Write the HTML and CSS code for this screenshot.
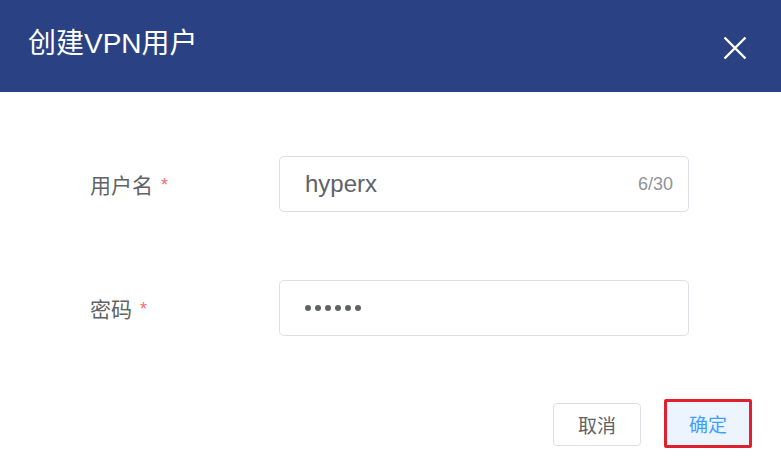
FILE: index.html
```html
<!DOCTYPE html>
<html lang="zh">
<head>
<meta charset="utf-8">
<link rel="stylesheet" href="styles.css">
</head>
<body>
<div class="dialog">
  <div class="header">
    <span class="title">创建VPN用户</span>
    <svg class="close" width="24" height="24" viewBox="0 0 24 24"><path d="M1.5 1.5 L22.5 22.5 M22.5 1.5 L1.5 22.5" stroke="#fff" stroke-width="2.4" fill="none"/></svg>
  </div>
  <div class="form">
    <div class="row">
      <div class="label">用户名<span class="req">*</span></div>
      <div class="input">
        <span class="value">hyperx</span>
        <span class="count">6/30</span>
      </div>
    </div>
    <div class="row">
      <div class="label">密码<span class="req">*</span></div>
      <div class="input">
        <span class="dots"><i></i><i></i><i></i><i></i><i></i><i></i></span>
      </div>
    </div>
  </div>
  <div class="footer">
    <div class="btn">取消</div>
    <div class="btn primary">确定</div>
  </div>
</div>
</body>
</html>
```
FILE: styles.css
```css
html, body {
  margin: 0;
  padding: 0;
  background: #fff;
  font-family: "Liberation Sans", "Noto Sans CJK SC", sans-serif;
}
.dialog {
  width: 781px;
  height: 475px;
  display: flex;
  flex-direction: column;
}
.header {
  height: 92px;
  background: #2a4283;
  display: flex;
  align-items: center;
  justify-content: space-between;
  padding: 0 34px 0 28px;
  box-sizing: border-box;
}
.title {
  color: #fff;
  font-size: 28px;
  line-height: 1;
  margin-top: -4px;
}
.close {
  display: block;
  margin-top: 4px;
}
.form {
  padding: 64px 0 0 90px;
  display: flex;
  flex-direction: column;
  gap: 68px;
}
.row {
  display: flex;
  align-items: center;
  height: 56px;
}
.label {
  width: 189px;
  font-size: 21px;
  color: #606266;
}
.req {
  color: #f56c6c;
  font-size: 18px;
  margin-left: 8px;
  vertical-align: 2px;
}
.input {
  width: 410px;
  height: 56px;
  box-sizing: border-box;
  border: 1px solid #dcdfe6;
  border-radius: 5px;
  display: flex;
  align-items: center;
  justify-content: space-between;
  padding: 0 15px 0 25px;
}
.value {
  font-size: 24px;
  color: #606266;
}
.count {
  font-size: 18px;
  color: #909399;
}
.dots {
  display: flex;
  gap: 4px;
}
.dots i {
  width: 6px;
  height: 6px;
  border-radius: 50%;
  background: #606266;
}
.footer {
  display: flex;
  justify-content: flex-end;
  align-items: center;
  gap: 23px;
  padding: 63px 29px 0 0;
}
.btn {
  width: 88px;
  height: 43px;
  box-sizing: border-box;
  border: 1px solid #dcdfe6;
  border-radius: 4px;
  display: flex;
  align-items: center;
  justify-content: center;
  font-size: 19px;
  color: #606266;
  margin-top: 1px;
}
.btn.primary {
  height: 49px;
  margin-top: 0;
  border: 3px solid #e0202e;
  border-radius: 2px;
  background: #ecf5ff;
  color: #409eff;
}
```
